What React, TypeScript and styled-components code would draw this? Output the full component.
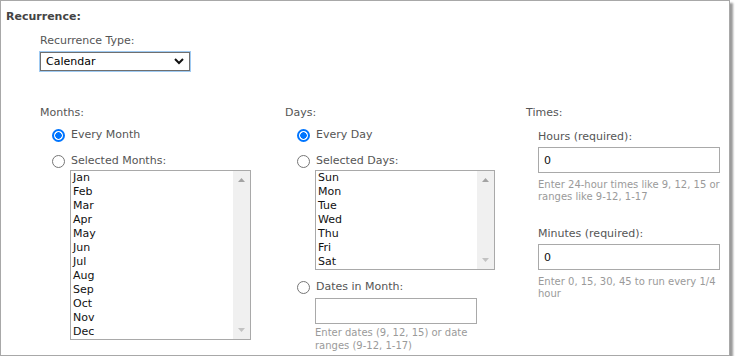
import styled, { createGlobalStyle } from "styled-components";

const GlobalStyle = createGlobalStyle`
  html, body {
    margin: 0;
    padding: 0;
    background: #fff;
  }
  body {
    font-family: "DejaVu Sans", Verdana, sans-serif;
    font-size: 11px;
    color: #555;
  }
`;

const months = ["Jan", "Feb", "Mar", "Apr", "May", "Jun", "Jul", "Aug", "Sep", "Oct", "Nov", "Dec"];
const days = ["Sun", "Mon", "Tue", "Wed", "Thu", "Fri", "Sat"];

const Radio = ({ checked }: { checked?: boolean }) => <RadioCircle $checked={checked} />;

const ListBox = ({ items, width }: { items: string[]; width: number }) => (
  <ListFrame $width={width}>
    <ListItems>
      {items.map((item) => (
        <ListItem key={item}>{item}</ListItem>
      ))}
    </ListItems>
    <ScrollTrack>
      <Arrow viewBox="0 0 7 4">
        <polygon points="0,4 3.5,0 7,4" fill="#a3a3a3" />
      </Arrow>
      <Arrow viewBox="0 0 7 4">
        <polygon points="0,0 7,0 3.5,4" fill="#c2c2c2" />
      </Arrow>
    </ScrollTrack>
  </ListFrame>
);

const App = () => {
  return (
    <>
      <GlobalStyle />
      <Panel>
        <Title>Recurrence:</Title>
        <TypeField>
          <Label>Recurrence Type:</Label>
          <Select>
            <span>Calendar</span>
            <svg width="10" height="7" viewBox="0 0 10 7">
              <polyline points="1,1 5,5 9,1" fill="none" stroke="#111" strokeWidth="2" />
            </svg>
          </Select>
        </TypeField>

        <Columns>
          <Column>
            <Label>Months:</Label>
            <RadioRow $top={6}>
              <Radio checked />
              <RadioLabel>Every Month</RadioLabel>
            </RadioRow>
            <RadioRow $top={8}>
              <Radio />
              <RadioLabel>Selected Months:</RadioLabel>
            </RadioRow>
            <Indented $top={0}>
              <ListBox items={months} width={181} />
            </Indented>
          </Column>

          <Column>
            <Label>Days:</Label>
            <RadioRow $top={6}>
              <Radio checked />
              <RadioLabel>Every Day</RadioLabel>
            </RadioRow>
            <RadioRow $top={8}>
              <Radio />
              <RadioLabel>Selected Days:</RadioLabel>
            </RadioRow>
            <Indented $top={0}>
              <ListBox items={days} width={180} />
            </Indented>
            <RadioRow $top={8}>
              <Radio />
              <RadioLabel>Dates in Month:</RadioLabel>
            </RadioRow>
            <Indented $top={2}>
              <TextBox $width={162} />
              <Hint $top={2} $line={13}>
                Enter dates (9, 12, 15) or date
                <br />
                ranges (9-12, 1-17)
              </Hint>
            </Indented>
          </Column>

          <Column>
            <Label>Times:</Label>
            <TimeField $top={10}>
              <Label>Hours (required):</Label>
              <TextBox $width={182}>0</TextBox>
              <Hint $top={3} $line={12}>
                Enter 24-hour times like 9, 12, 15 or
                <br />
                ranges like 9-12, 1-17
              </Hint>
            </TimeField>
            <TimeField $top={24}>
              <Label>Minutes (required):</Label>
              <TextBox $width={182}>0</TextBox>
              <Hint $top={3} $line={12}>
                Enter 0, 15, 30, 45 to run every 1/4
                <br />
                hour
              </Hint>
            </TimeField>
          </Column>
        </Columns>
      </Panel>
    </>
  );
};

export default App;

const Panel = styled.div`
  box-sizing: border-box;
  width: 730px;
  height: 356px;
  border: 1px solid #a8a8a8;
  box-shadow: 3px 3px 2px #9a9a9a;
  padding: 9px 5px 0;
  overflow: hidden;
`;

const Title = styled.div`
  font-weight: bold;
  line-height: 14px;
  color: #444;
`;

const TypeField = styled.div`
  margin: 10px 0 0 34px;
`;

const Label = styled.div`
  line-height: 14px;
  color: #555;
`;

const Select = styled.div`
  box-sizing: border-box;
  width: 150px;
  height: 19px;
  margin: 4px 0 0 0;
  border: 1px solid #6f6f6f;
  box-shadow: 0 0 0 1px #9fcaf2;
  display: flex;
  align-items: center;
  justify-content: space-between;
  padding: 0 5px 0 5px;
  color: #000;
  line-height: 14px;
`;

const Columns = styled.div`
  display: grid;
  grid-template-columns: 245px 241px 1fr;
  margin: 35px 0 0 34px;
`;

const Column = styled.div`
  display: flex;
  flex-direction: column;
`;

const RadioRow = styled.div<{ $top: number }>`
  display: flex;
  align-items: center;
  height: 18px;
  gap: 6px;
  margin: ${(p) => p.$top}px 0 0 12px;
`;

const RadioCircle = styled.span<{ $checked?: boolean }>`
  box-sizing: border-box;
  width: 13px;
  height: 13px;
  border-radius: 50%;
  border: ${(p) => (p.$checked ? "2px solid #0075ff" : "1px solid #767676")};
  background: ${(p) => (p.$checked ? "radial-gradient(circle, #0075ff 0 3px, #fff 3.5px)" : "#fff")};
  flex: none;
`;

const RadioLabel = styled.span`
  line-height: 14px;
  color: #555;
`;

const Indented = styled.div<{ $top: number }>`
  margin: ${(p) => p.$top}px 0 0 30px;
`;

const ListFrame = styled.div<{ $width: number }>`
  box-sizing: border-box;
  width: ${(p) => p.$width}px;
  border: 1px solid #a9a9a9;
  display: flex;
`;

const ListItems = styled.div`
  flex: 1;
  padding-left: 2px;
`;

const ListItem = styled.div`
  line-height: 14px;
  height: 14px;
  color: #111;
`;

const ScrollTrack = styled.div`
  width: 17px;
  background: #f0f0f0;
  display: flex;
  flex-direction: column;
  justify-content: space-between;
  align-items: center;
  padding: 7px 0;
`;

const Arrow = styled.svg`
  width: 7px;
  height: 4px;
`;

const TextBox = styled.div<{ $width: number }>`
  box-sizing: border-box;
  width: ${(p) => p.$width}px;
  height: 26px;
  border: 1px solid #a9a9a9;
  padding: 0 5px;
  display: flex;
  align-items: center;
  color: #111;
`;

const Hint = styled.div<{ $top: number; $line: number }>`
  margin-top: ${(p) => p.$top}px;
  font-size: 10px;
  line-height: ${(p) => p.$line}px;
  color: #9a9a9a;
`;

const TimeField = styled.div<{ $top: number }>`
  margin: ${(p) => p.$top}px 0 0 12px;
  display: flex;
  flex-direction: column;
  gap: 3px;

  & > ${Hint} {
    margin-top: 3px;
  }
`;
